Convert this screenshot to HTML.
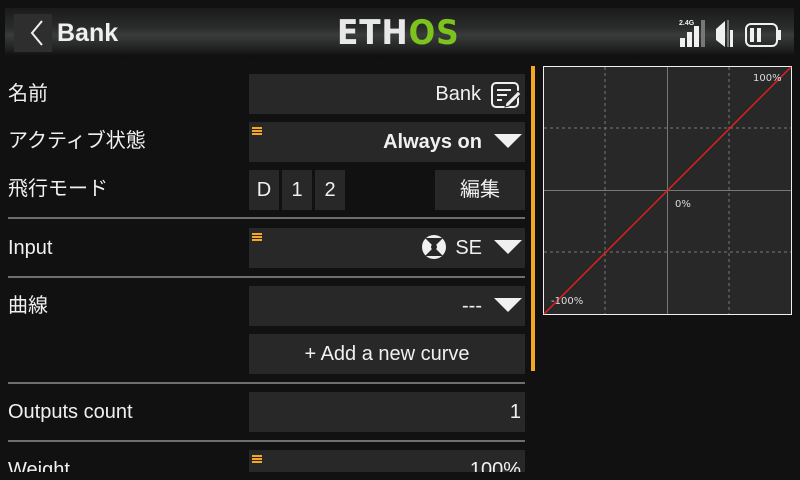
<!DOCTYPE html>
<html><head><meta charset="utf-8"><style>
*{margin:0;padding:0;box-sizing:border-box}
body{width:800px;height:480px;background:#111;overflow:hidden;position:relative;font-family:"Liberation Sans","Noto Sans CJK JP",sans-serif;color:#f0f0f0}
.hdr{position:absolute;left:5px;top:8px;width:789px;height:49px;background:linear-gradient(#1b1b1b 0%,#2a2b2b 40%,#3a3c3c 55%,#242525 80%,#0e0e0e 100%)}
.back{position:absolute;left:14px;top:14px;width:38px;height:38px;background:#2e2e2e}
.abs{position:absolute}
.lbl{position:absolute;left:8px;font-size:20px;line-height:24px}
.f{position:absolute;left:249px;width:276px;height:40px;background:#282828;font-size:20px;line-height:40px;text-align:right;padding-right:3px}
.sep{position:absolute;left:8px;width:517px;height:2px;background:#6e6e6e}
.ham{position:absolute;left:3px;top:5px;width:10px;height:8px;background:repeating-linear-gradient(#f5a623 0 2px,transparent 2px 3px)}
.tri{display:inline-block;width:0;height:0;border-left:14px solid transparent;border-right:14px solid transparent;border-top:14px solid #f0f0f0;vertical-align:middle;margin-left:12px;margin-top:-3px}
.clip{position:absolute;left:0;top:60px;width:540px;height:412px;overflow:hidden}
</style></head><body>
<div class="hdr"></div>
<div class="back"></div>
<svg class="abs" style="left:14px;top:14px" width="38" height="38"><path d="M28 7 L18 19 L28 31" stroke="#f0f0f0" stroke-width="2" fill="none"/></svg>
<div class="abs" style="left:57px;top:18px;font-size:25px;font-weight:bold;line-height:30px">Bank</div>
<div class="abs" style="left:337px;top:15px;font-size:34px;font-weight:bold;line-height:36px;letter-spacing:1px;font-family:'DejaVu Sans',sans-serif;transform:scaleX(0.92);transform-origin:left"><span style="color:#e8e8e8">ETH</span><span style="color:#7cc31e">OS</span></div>
<svg class="abs" style="left:676px;top:17px" width="110" height="32">
<text x="3" y="8" font-size="7" font-weight="bold" fill="#eee" font-family="Liberation Sans">2.4G</text>
<rect x="4" y="21" width="5" height="9" fill="#f0f0f0"/><rect x="11" y="15" width="5" height="15" fill="#f0f0f0"/><rect x="18" y="9" width="5" height="21" fill="#f0f0f0"/><rect x="25" y="3" width="4" height="27" fill="#777"/>
<path d="M40 12 L49 4 L49 30 L40 23 Z" fill="#f0f0f0"/><rect x="51" y="3" width="2" height="27" fill="#777"/><rect x="54" y="13" width="3" height="17" fill="#f0f0f0"/>
<rect x="70" y="7" width="31" height="22" rx="5" fill="none" stroke="#f0f0f0" stroke-width="2"/><rect x="102" y="13" width="3" height="10" fill="#f0f0f0"/><rect x="74" y="11" width="4" height="14" fill="#f0f0f0"/><rect x="81" y="11" width="4" height="14" fill="#f0f0f0"/>
</svg>
<div class="abs" style="left:531px;top:66px;width:4px;height:305px;background:#f5a623"></div>
<svg class="abs" style="left:543px;top:66px" width="250" height="250">
<rect x="0.5" y="0.5" width="248" height="248" fill="#282828" stroke="#f0f0f0"/>
<g stroke="#777" stroke-dasharray="3,3"><line x1="62" y1="1" x2="62" y2="248"/><line x1="186" y1="1" x2="186" y2="248"/><line x1="1" y1="62" x2="248" y2="62"/><line x1="1" y1="186" x2="248" y2="186"/></g>
<g stroke="#777"><line x1="124.5" y1="1" x2="124.5" y2="248"/><line x1="1" y1="124.5" x2="248" y2="124.5"/></g>
<line x1="1" y1="248" x2="248" y2="1" stroke="#e02020" stroke-width="1.5"/>
<g fill="#ddd" font-size="10" font-family="DejaVu Sans"><text x="210" y="15">100%</text><text x="132" y="141">0%</text><text x="8" y="238">-100%</text></g>
</svg>
<div class="clip">
<div class="lbl" style="top:22px">名前</div>
<div class="f" style="top:14px;padding-right:44px">Bank</div>
<svg class="abs" style="left:490px;top:21px" width="32" height="28"><rect x="2" y="2" width="26" height="24" rx="4" fill="none" stroke="#f0f0f0" stroke-width="2"/><path d="M7 9h14M7 14h10M7 19h5" stroke="#f0f0f0" stroke-width="2"/><path d="M16 22 L28 10 L31 13 L19 25 L15 26Z" fill="#f0f0f0" stroke="#282828" stroke-width="1"/></svg>
<div class="lbl" style="top:69px">アクティブ状態</div>
<div class="f" style="top:62px;font-weight:bold"><span class="ham"></span>Always on<span class="tri"></span></div>
<div class="lbl" style="top:117px">飛行モード</div>
<div class="f" style="top:110px;width:30px;text-align:center;padding:0">D</div>
<div class="f" style="top:110px;left:282px;width:30px;text-align:center;padding:0">1</div>
<div class="f" style="top:110px;left:315px;width:30px;text-align:center;padding:0">2</div>
<div class="f" style="top:110px;left:435px;width:90px;text-align:center;padding:0">編集</div>
<div class="sep" style="top:157px"></div>
<div class="lbl" style="top:176px">Input</div>
<div class="f" style="top:168px"><span class="ham"></span><svg width="26" height="26" style="vertical-align:middle;margin-right:8px;margin-top:-3px"><circle cx="13" cy="13" r="12" fill="#f0f0f0"/><path d="M4 4 L22 4 L13 13Z M4 22 L22 22 L13 13Z" fill="#282828"/><circle cx="13" cy="13" r="3" fill="#282828"/></svg>SE<span class="tri"></span></div>
<div class="sep" style="top:216px"></div>
<div class="lbl" style="top:234px">曲線</div>
<div class="f" style="top:226px">---<span class="tri"></span></div>
<div class="f" style="top:274px;text-align:center;padding:0">+ Add a new curve</div>
<div class="sep" style="top:322px"></div>
<div class="lbl" style="top:340px">Outputs count</div>
<div class="f" style="top:332px;padding-right:4px">1</div>
<div class="sep" style="top:380px"></div>
<div class="lbl" style="top:398px">Weight</div>
<div class="f" style="top:390px;padding-right:4px"><span class="ham"></span>100%</div>
</div>
</body></html>
